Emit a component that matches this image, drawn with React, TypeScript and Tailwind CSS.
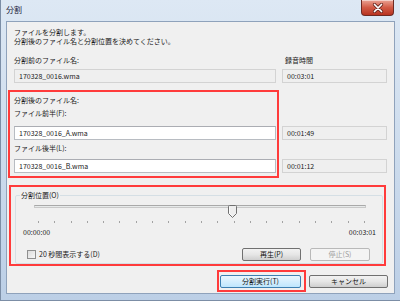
const font = { fontFamily: '"Noto Sans CJK JP", "Noto Sans", sans-serif' };

const CloseButton = () => (
  <div className="mr-[6px] flex h-[16px] w-[33px] items-center justify-center rounded-b-[4px] border border-t-0 border-[#6e2a22] bg-gradient-to-b from-[#e9a395] via-[#d25a45] to-[#b8321f] shadow-[inset_0_1px_0_rgba(255,255,255,0.5)]">
    <svg width="12" height="10" viewBox="0 0 12 10">
      <path d="M2.5 1.5 L9.5 8.5 M9.5 1.5 L2.5 8.5" stroke="#6b2a22" strokeWidth="3.2" strokeLinecap="round" />
      <path d="M2.5 1.5 L9.5 8.5 M9.5 1.5 L2.5 8.5" stroke="#ffffff" strokeWidth="1.7" strokeLinecap="round" />
    </svg>
  </div>
);

const TextBox = ({ value, readOnly, w }: { value: string; readOnly?: boolean; w: string }) => (
  <div
    className={`${w} flex h-[14px] items-center border pl-[4px] text-[7px] leading-[9px] text-[#1a1a1a] ${
      readOnly ? "border-[#d3d3d3] bg-[#efefef]" : "border-[#b8bcc2] border-t-[#abadb3] bg-white"
    }`}
  >
    {value}
  </div>
);

const Button = ({ label, w, disabled, primary }: { label: string; w: string; disabled?: boolean; primary?: boolean }) => (
  <div
    className={`${w} flex h-[13px] items-center justify-center rounded-[2px] border text-[7px] leading-[9px] ${
      disabled
        ? "border-[#b9b9b9] bg-[#f4f4f4] text-[#9d9d9d]"
        : primary
        ? "border-[#3c7fb1] bg-gradient-to-b from-[#eaf6fd] to-[#bee6fd] text-[#111]"
        : "border-[#707070] bg-gradient-to-b from-[#f2f2f2] via-[#e6e6e6] to-[#cfcfcf] text-[#111]"
    }`}
  >
    {label}
  </div>
);

export default function App() {
  const ticks = Array.from({ length: 21 }, (_, i) => i);

  return (
    <div
      className="flex h-[301px] w-[400px] flex-col border-l border-b border-[#7c8ea6] bg-gradient-to-b from-[#dde8f4] via-[#cddced] to-[#bccfe6]"
      style={font}
    >
      {/* title bar */}
      <div className="flex h-[21px] items-start justify-between">
        <div className="pl-[5px] pt-[4px] text-[8px] leading-[11px] text-[#1b1d3a]">分割</div>
        <CloseButton />
      </div>

      {/* client area */}
      <div className="mx-[5px] flex h-[273px] flex-col border border-[#8fa2bb] bg-[#f0f0f0] text-[7px] leading-[9px] text-[#1a1a1a]">
        <div className="mt-[6px] pl-[7px]">
          <p>ファイルを分割します。</p>
          <p>分割後のファイル名と分割位置を決めてください。</p>
        </div>

        <div className="mt-[10px] flex pl-[7px]">
          <span className="w-[271px]">分割前のファイル名:</span>
          <span>録音時間</span>
        </div>
        <div className="mt-[4px] flex gap-[6px] pl-[7px]">
          <TextBox value="170328_0016.wma" readOnly w="w-[262px]" />
          <TextBox value="00:03:01" readOnly w="w-[105px]" />
        </div>

        {/* after split section */}
        <div className="mt-[7px] flex">
          <div className="ml-[1px] flex h-[88px] w-[271px] flex-col border-2 border-[#ff3b3b] pl-[4px] pt-[4px]">
            <p>分割後のファイル名:</p>
            <p className="mt-[4px]">ファイル前半(F):</p>
            <div className="mt-[8px]">
              <TextBox value="170328_0016_A.wma" w="w-[262px]" />
            </div>
            <p className="mt-[4px]">ファイル後半(L):</p>
            <div className="mt-[6px]">
              <TextBox value="170328_0016_B.wma" w="w-[262px]" />
            </div>
          </div>
          <div className="ml-[3px] flex flex-col pt-[36px]">
            <TextBox value="00:01:49" readOnly w="w-[105px]" />
            <div className="mt-[19px]">
              <TextBox value="00:01:12" readOnly w="w-[105px]" />
            </div>
          </div>
        </div>

        {/* split position */}
        <div className="ml-[2px] mt-[7px] h-[81px] w-[377px] border-2 border-[#ff3b3b]">
          <fieldset className="ml-[4px] mt-[4px] w-[368px] rounded-[2px] border border-[#d5dfe5] pb-[2px]">
            <legend className="ml-[4px] px-[1px] leading-[9px]">分割位置(O)</legend>

            <div className="relative mt-[5px] h-[13px]">
              <div className="ml-[18px] mt-[5px] h-[3px] w-[332px] border border-[#c9c9c9] border-t-[#a9a9a9] bg-[#e7eaea]" />
              <svg className="absolute left-[212px] top-0" width="9" height="13" viewBox="0 0 9 13">
                <path d="M0.5 1.5 Q0.5 0.5 1.5 0.5 H7.5 Q8.5 0.5 8.5 1.5 V8.5 L4.5 12.5 L0.5 8.5 Z" fill="#eeeeee" stroke="#707070" />
                <path d="M1.5 2 V8.3 L4.5 11.2" fill="none" stroke="#ffffff" strokeWidth="0.8" />
              </svg>
            </div>

            <div className="ml-[22px] mt-[3px] flex h-[2px] w-[327px] justify-between">
              {ticks.map((t) => (
                <div key={t} className="h-[2px] w-[1px] bg-[#a3a3a3]" />
              ))}
            </div>

            <div className="ml-[7px] mt-[5px] flex w-[353px] justify-between">
              <span>00:00:00</span>
              <span>00:03:01</span>
            </div>

            <div className="ml-[11px] mr-[12px] mt-[11px] flex h-[13px] items-center">
              <div className="h-[9px] w-[9px] border border-[#8f8f8f] bg-gradient-to-br from-[#dcdcdc] to-[#f7f7f7]" />
              <span className="ml-[3px]">20 秒間表示する(D)</span>
              <div className="ml-auto flex gap-[9px]">
                <Button label="再生(P)" w="w-[59px]" />
                <Button label="停止(S)" w="w-[60px]" disabled />
              </div>
            </div>
          </fieldset>
        </div>

        {/* dialog buttons */}
        <div className="mt-[4px] flex items-center justify-end pr-[6px]">
          <div className="flex h-[22px] w-[89px] items-center border-2 border-[#ff3b3b] pl-[1px]">
            <Button label="分割実行(T)" w="w-[81px]" primary />
          </div>
          <div className="ml-[3px]">
            <Button label="キャンセル" w="w-[79px]" />
          </div>
        </div>
      </div>
    </div>
  );
}
